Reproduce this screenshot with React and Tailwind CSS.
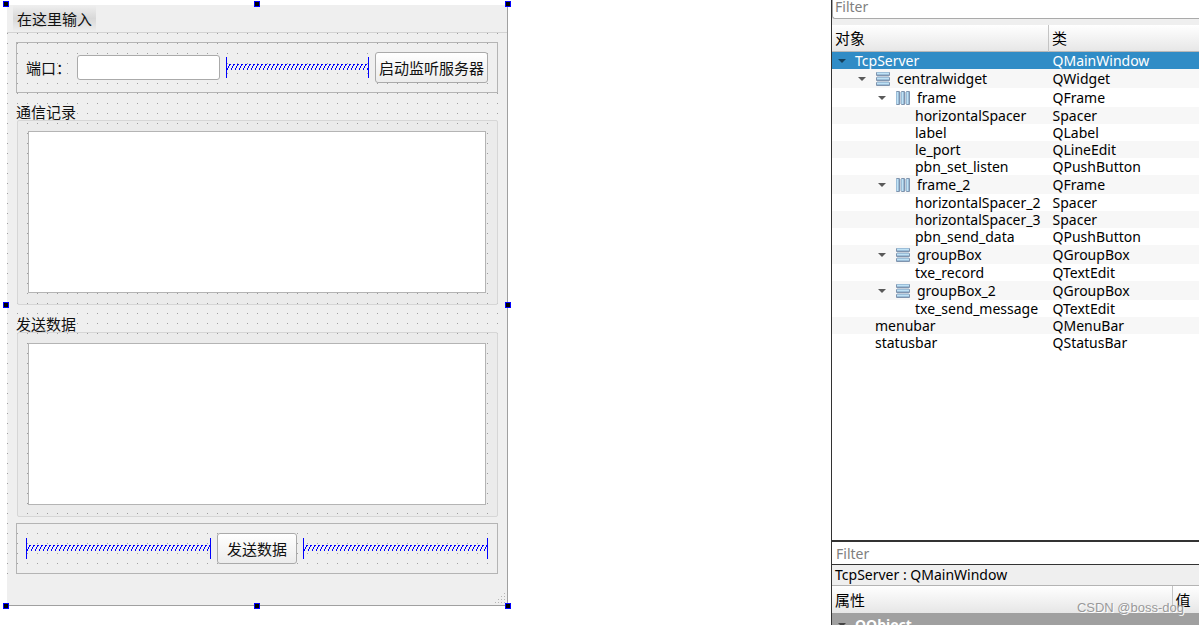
import React from 'react';

// ============================================================================
// DATA
// ============================================================================

const OBJECTS = [
  { name: 'TcpServer', type: 'QMainWindow', level: 0, open: true, selected: true },
  { name: 'centralwidget', type: 'QWidget', level: 1, open: true, layout: 'vertical' },
  { name: 'frame', type: 'QFrame', level: 2, open: true, layout: 'horizontal' },
  { name: 'horizontalSpacer', type: 'Spacer', level: 3 },
  { name: 'label', type: 'QLabel', level: 3 },
  { name: 'le_port', type: 'QLineEdit', level: 3 },
  { name: 'pbn_set_listen', type: 'QPushButton', level: 3 },
  { name: 'frame_2', type: 'QFrame', level: 2, open: true, layout: 'horizontal' },
  { name: 'horizontalSpacer_2', type: 'Spacer', level: 3 },
  { name: 'horizontalSpacer_3', type: 'Spacer', level: 3 },
  { name: 'pbn_send_data', type: 'QPushButton', level: 3 },
  { name: 'groupBox', type: 'QGroupBox', level: 2, open: true, layout: 'vertical' },
  { name: 'txe_record', type: 'QTextEdit', level: 3 },
  { name: 'groupBox_2', type: 'QGroupBox', level: 2, open: true, layout: 'vertical' },
  { name: 'txe_send_message', type: 'QTextEdit', level: 3 },
  { name: 'menubar', type: 'QMenuBar', level: 1 },
  { name: 'statusbar', type: 'QStatusBar', level: 1 }
];

const indents = ['pl-0', 'pl-5', 'pl-10', 'pl-15'];

// ============================================================================
// ICONS
// ============================================================================

const Arrow = ({ className }) => (
  <svg className={`w-2 h-1 ${className}`} viewBox="0 0 8 4" aria-hidden="true">
    <path d="M0 0h8L4 4z" fill="currentColor" />
  </svg>
);

const LayoutIcon = ({ direction }) => (
  <svg className="w-[14px] h-[14px] shrink-0" viewBox="0 0 14 14" aria-hidden="true">
    <g transform={direction === 'horizontal' ? 'matrix(0 1 1 0 0 0)' : undefined}>
      <rect x="1" width="12" height="14" fill="#c3cedb" />
      {[0, 5, 10].map((y) => (
        <g key={y}>
          <rect x="0" y={y} width="14" height="4" rx="1" fill="#7f94ae" />
          <rect x="1" y={y} width="12" height="3" fill="#9bbdd8" />
          <rect x="1" y={y + 1} width="12" height="1" fill="#bfe2f5" />
        </g>
      ))}
    </g>
  </svg>
);

// Horizontal spring, drawn as repeated slanted strokes between two bars
const Spacer = ({ id }) => (
  <div className="flex-1 min-w-0 h-[21px] border-x border-[#0000ff]">
    <svg className="block w-full h-full" shapeRendering="crispEdges" aria-hidden="true">
      <defs>
        <pattern id={id} width="4" height="6" y="7" patternUnits="userSpaceOnUse">
          <path d="M2 0h2v1h-2zM2 1h1v1h-1zM1 2h1v2h-1zM0 4h1v2h-1z" fill="#0000ff" />
        </pattern>
      </defs>
      <rect y="7" width="100%" height="6" fill={`url(#${id})`} />
    </svg>
  </div>
);

const SizeGrip = () => (
  <svg className="w-[10px] h-[10px]" viewBox="0 0 10 10" shapeRendering="crispEdges" aria-hidden="true">
    <path
      d="M9 0h1v1h-1zM6 3h1v1h-1zM9 3h1v1h-1zM3 6h1v1h-1zM6 6h1v1h-1zM9 6h1v1h-1zM0 9h1v1h-1zM3 9h1v1h-1zM6 9h1v1h-1zM9 9h1v1h-1z"
      fill="#b4b4b4"
    />
  </svg>
);

// ============================================================================
// FORM
// ============================================================================

const Handle = () => <span className="w-[6px] h-[6px] bg-black border border-[#0000ff]" />;

const SelectionHandles = () => (
  <div className="absolute -inset-1 flex flex-col justify-between pointer-events-none">
    <div className="flex justify-between"><Handle /><Handle /><Handle /></div>
    <div className="flex justify-between"><Handle /><Handle /></div>
    <div className="flex justify-between"><Handle /><Handle /><Handle /></div>
  </div>
);

const Frame = ({ children }) => (
  <div className="flex items-center gap-[6px] p-[9px] border border-[#b4b4b4]">{children}</div>
);

const PushButton = ({ children }) => (
  <button
    type="button"
    className="h-[31px] shrink-0 border border-[#aaaaaa] rounded-[3px] bg-linear-to-b from-white to-[#ececec] whitespace-nowrap"
  >
    {children}
  </button>
);

const GroupBox = ({ id, title }) => (
  <div className="flex flex-col flex-1 min-h-0">
    <label htmlFor={id} className="h-[21px] leading-[26px]">{title}</label>
    <div className="flex flex-1 min-h-0 ml-px p-[10px] pr-[11px] pb-[11px] border border-[#d6d6d6] rounded-[2px] bg-black/[0.015]">
      <textarea id={id} className="flex-1 resize-none bg-white border border-[#b4b4b4] outline-none" />
    </div>
  </div>
);

const FormWindow = () => (
  <section className="relative flex flex-col bg-[#efefef] border-r border-b border-[#a0a0a0] text-[15px] leading-5 text-[#111111]">
    <div className="flex h-[28px] border-b border-[#d3d3d3]">
      <button type="button" className="ml-[6px] px-[4px] bg-linear-to-b from-[#efefef] via-[#d8d8d8] to-[#efefef]">
        在这里输入
      </button>
    </div>

    <div className="flex flex-col flex-1 min-h-0 gap-[6px] p-[9px] bg-[conic-gradient(from_0deg_at_1px_1px,transparent_75%,#a0a0a0_0)] bg-size-[10px_10px]">
      <Frame>
        <label htmlFor="le_port" className="shrink-0">端口：</label>
        <input
          id="le_port"
          type="text"
          className="flex-1 min-w-0 h-[25px] bg-white border border-[#aaaaaa] rounded-[3px] outline-none"
        />
        <Spacer id="spring" />
        <PushButton><span className="px-[3px]">启动监听服务器</span></PushButton>
      </Frame>

      <GroupBox id="txe_record" title="通信记录" />
      <GroupBox id="txe_send_message" title="发送数据" />

      <Frame>
        <Spacer id="spring_2" />
        <PushButton><span className="px-[9px]">发送数据</span></PushButton>
        <Spacer id="spring_3" />
      </Frame>
    </div>

    <div className="flex h-[22px] justify-end items-end p-[2px]">
      <SizeGrip />
    </div>
    <SelectionHandles />
  </section>
);

// ============================================================================
// OBJECT INSPECTOR
// ============================================================================

const ObjectRow = ({ item }) => {
  const height = item.layout ? 'h-[19px]' : 'h-[17px]';
  const colors = item.selected ? 'bg-[#308cc6] text-white' : 'even:bg-[#f7f7f7]';

  return (
    <tr className={`${height} ${colors}`}>
      <td className="p-0">
        <div className={`flex items-center ${indents[item.level]}`}>
          <span className="flex w-5 shrink-0 justify-center">
            {item.open && <Arrow className={item.selected ? 'text-[#14405c]' : 'text-[#5a5a5a]'} />}
          </span>
          {item.layout && (
            <span className="mx-1"><LayoutIcon direction={item.layout} /></span>
          )}
          <span className="pl-[3px]">{item.name}</span>
        </div>
      </td>
      <td className="p-0 pl-1">{item.type}</td>
    </tr>
  );
};

const ObjectInspector = () => (
  <div className="flex-1 min-h-0 overflow-hidden">
    <div className="bg-[#efefef] pb-[6px]">
      <input
        type="text"
        placeholder="Filter"
        aria-label="Filter objects"
        className="block w-full h-[19px] px-[2px] pb-[5px] bg-white border-b border-l border-[#aaaaaa] rounded-bl-[3px] placeholder:text-[#808080] outline-none"
      />
    </div>
    <table className="w-full table-fixed border-collapse leading-[17px]">
      <thead>
        <tr className="h-[27px] bg-linear-to-b from-white to-[#e6e6e6] text-left shadow-[inset_0_-1px_0_#b8b8b8]">
          <th className="w-[59%] p-0 pl-[3px] font-normal text-[15px]">对象</th>
          <th className="p-0 pl-[3px] font-normal text-[15px] border-l border-[#c4c4c4]">类</th>
        </tr>
      </thead>
      <tbody>
        {OBJECTS.map((item) => <ObjectRow key={item.name} item={item} />)}
      </tbody>
    </table>
  </div>
);

// ============================================================================
// PROPERTY EDITOR
// ============================================================================

const PropertyEditor = () => (
  <div className="shrink-0">
    <input
      type="text"
      placeholder="Filter"
      aria-label="Filter properties"
      className="block w-full h-[25px] px-1 bg-white border-t-2 border-b border-[#333333] placeholder:text-[#808080] outline-none"
    />
    <p className="h-[21px] px-[3px] leading-[20px] bg-[#efefef] border-b border-[#b4b4b4]">
      TcpServer : QMainWindow
    </p>
    <div className="h-[39px] overflow-hidden">
      <table className="w-full table-fixed border-collapse">
        <thead>
          <tr className="h-[27px] bg-linear-to-b from-white to-[#e6e6e6] text-left">
            <th className="p-0 pt-px pl-[3px] font-normal text-[15px]">属性</th>
            <th className="w-[27px] p-0 pt-px pl-[3px] font-normal text-[15px] border-l border-[#c4c4c4]">值</th>
          </tr>
        </thead>
        <tbody>
          <tr className="h-[24px] bg-[#a0a0a0] text-white font-bold">
            <td colSpan={2} className="p-0">
              <div className="flex items-center">
                <span className="flex w-5 justify-center"><Arrow className="text-[#444444]" /></span>
                <span className="pl-[3px]">QObject</span>
              </div>
            </td>
          </tr>
        </tbody>
      </table>
    </div>
  </div>
);

export default function App() {
  return (
    <main className="relative grid grid-cols-[501fr_323fr_368fr] h-screen overflow-hidden pl-[7px] bg-white font-['Noto_Sans','Noto_Sans_CJK_SC',sans-serif]">
      <div className="grid pt-[5px] pb-[19px]">
        <FormWindow />
      </div>
      <aside className="col-start-3 flex flex-col min-h-0 border-l border-[#333333] text-[14px] leading-5 text-black">
        <ObjectInspector />
        <PropertyEditor />
      </aside>
      <span className="absolute right-[15px] bottom-[7px] text-[13px] leading-5 text-[#999999] font-['Liberation_Sans',sans-serif] [text-shadow:1px_1px_0_#ffffff]">
        CSDN @boss-dog
      </span>
    </main>
  );
}
